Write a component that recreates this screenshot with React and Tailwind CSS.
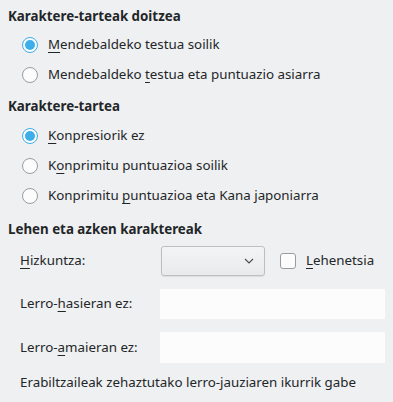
import React from 'react';

// Breeze-style dialog page: character spacing / asian layout options

const FONT = { fontFamily: '"Noto Sans", "Open Sans", sans-serif' };

function U({ children }) {
  return <span className="underline underline-offset-[3px] decoration-1">{children}</span>;
}

function Radio({ checked }) {
  return checked ? (
    <span className="flex h-4 w-4 shrink-0 items-center justify-center rounded-full border border-[#3daee9] bg-[#fcfcfc]">
      <span className="h-[10px] w-[10px] rounded-full bg-[#3daee9]" />
    </span>
  ) : (
    <span className="h-4 w-4 shrink-0 rounded-full border border-[#9a9c9e] bg-[#fcfcfc]" />
  );
}

function RadioRow({ checked, children }) {
  return (
    <div className="flex h-[30px] items-center gap-[10px] pl-[14px]">
      <Radio checked={checked} />
      <span>{children}</span>
    </div>
  );
}

function Heading({ children }) {
  return <div className="flex h-[18px] items-center font-bold">{children}</div>;
}

export default function App() {
  return (
    <div
      style={FONT}
      className="h-[402px] w-[393px] overflow-hidden bg-[#eff0f1] px-2 pt-2 text-[13.33px] text-[#232629]"
    >
      <Heading>Karaktere-tarteak doitzea</Heading>
      <div className="mt-1">
        <RadioRow checked>
          <U>M</U>endebaldeko testua soilik
        </RadioRow>
        <RadioRow>
          Mendebaldeko <U>t</U>estua eta puntuazio asiarra
        </RadioRow>
      </div>

      <div className="mt-2">
        <Heading>Karaktere-tartea</Heading>
      </div>
      <div className="mt-[5px]">
        <RadioRow checked>
          <U>K</U>onpresiorik ez
        </RadioRow>
        <RadioRow>
          K<U>o</U>nprimitu puntuazioa soilik
        </RadioRow>
        <RadioRow>
          Konprimitu <U>p</U>untuazioa eta Kana japoniarra
        </RadioRow>
      </div>

      <div className="mt-[10px]">
        <Heading>Lehen eta azken karaktereak</Heading>
      </div>

      <div className="mt-[7px] flex h-[30px] items-center pl-3">
        <span className="w-[141px]">
          <U>H</U>izkuntza:
        </span>
        <div className="flex h-[30px] w-[104px] items-center justify-end rounded-[3px] border border-[#bcbebf] bg-gradient-to-b from-[#f3f4f5] to-[#e9eaeb] pr-[10px] shadow-[0_1px_1px_rgba(0,0,0,0.08)]">
          <svg width="10" height="6" viewBox="0 0 10 6" fill="none">
            <path d="M1 1l4 4 4-4" stroke="#4d4f51" strokeWidth="1.2" />
          </svg>
        </div>
        <span className="ml-[15px] h-4 w-4 rounded-[3px] border border-[#9a9c9e] bg-[#fcfcfc]" />
        <span className="ml-[10px]">
          <U>L</U>ehenetsia
        </span>
      </div>

      <div className="mt-[13px] flex h-[30px] items-center pl-3">
        <span className="w-[140px]">
          Lerro-<U>h</U>asieran ez:
        </span>
        <div className="h-[30px] w-[225px] bg-[#fcfcfc]" />
      </div>

      <div className="mt-[13px] flex h-[31px] items-center pl-3">
        <span className="w-[140px]">
          Lerro-<U>a</U>maieran ez:
        </span>
        <div className="h-[31px] w-[225px] bg-[#fcfcfc]" />
      </div>

      <div className="mt-[11px] flex h-[18px] items-center pl-3">
        Erabiltzaileak zehaztutako lerro-jauziaren ikurrik gabe
      </div>
    </div>
  );
}
